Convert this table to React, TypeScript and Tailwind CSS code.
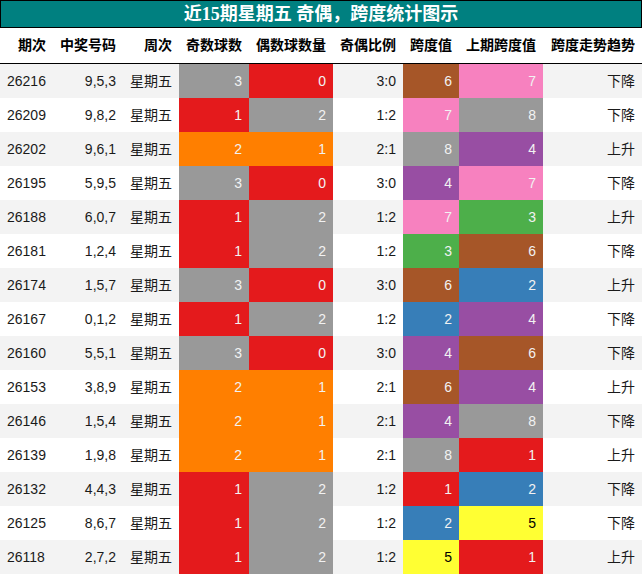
import React from "react";

const rows: [string, string, number, number, string, number, number, string][] = [
  ["26216", "9,5,3", 3, 0, "3:0", 6, 7, "下降"],
  ["26209", "9,8,2", 1, 2, "1:2", 7, 8, "下降"],
  ["26202", "9,6,1", 2, 1, "2:1", 8, 4, "上升"],
  ["26195", "5,9,5", 3, 0, "3:0", 4, 7, "下降"],
  ["26188", "6,0,7", 1, 2, "1:2", 7, 3, "上升"],
  ["26181", "1,2,4", 1, 2, "1:2", 3, 6, "下降"],
  ["26174", "1,5,7", 3, 0, "3:0", 6, 2, "上升"],
  ["26167", "0,1,2", 1, 2, "1:2", 2, 4, "下降"],
  ["26160", "5,5,1", 3, 0, "3:0", 4, 6, "下降"],
  ["26153", "3,8,9", 2, 1, "2:1", 6, 4, "上升"],
  ["26146", "1,5,4", 2, 1, "2:1", 4, 8, "下降"],
  ["26139", "1,9,8", 2, 1, "2:1", 8, 1, "上升"],
  ["26132", "4,4,3", 1, 2, "1:2", 1, 2, "下降"],
  ["26125", "8,6,7", 1, 2, "1:2", 2, 5, "下降"],
  ["26118", "2,7,2", 1, 2, "1:2", 5, 1, "上升"],
];

const oddColor: Record<number, string> = {
  1: "bg-[#e41a1c] text-[#f2f2f2]",
  2: "bg-[#ff7f00] text-[#f2f2f2]",
  3: "bg-[#999999] text-[#f2f2f2]",
};

const evenColor: Record<number, string> = {
  0: "bg-[#e41a1c] text-[#f2f2f2]",
  1: "bg-[#ff7f00] text-[#f2f2f2]",
  2: "bg-[#999999] text-[#f2f2f2]",
};

const spanColor: Record<number, string> = {
  1: "bg-[#e41a1c] text-[#f2f2f2]",
  2: "bg-[#377eb8] text-[#f2f2f2]",
  3: "bg-[#4daf4a] text-[#f2f2f2]",
  4: "bg-[#984ea3] text-[#f2f2f2]",
  5: "bg-[#ffff33] text-black",
  6: "bg-[#a65628] text-[#f2f2f2]",
  7: "bg-[#f781bf] text-[#f2f2f2]",
  8: "bg-[#999999] text-[#f2f2f2]",
};

const headers = ["期次", "中奖号码", "周次", "奇数球数", "偶数球数量", "奇偶比例", "跨度值", "上期跨度值", "跨度走势趋势"];

const grid = "grid grid-cols-[53px_70px_56px_70px_84px_70px_56px_84px_99px]";

export default function App() {
  return (
    <div className="w-[642px] h-[575px] bg-white text-[14px] text-[#1a1a1a] font-['Liberation_Sans','Noto_Sans_CJK_SC',sans-serif]">
      <div className="h-[28px] bg-[#008080] border border-black flex items-center justify-center text-white font-bold text-[18px] font-['Liberation_Serif','Noto_Sans_CJK_SC',serif]">
        近15期星期五 奇偶，跨度统计图示
      </div>
      <div className={`${grid} h-[36px] border-b border-black font-bold text-black`}>
        {headers.map((h) => (
          <div key={h} className="flex items-center justify-end pr-[7px]">
            {h}
          </div>
        ))}
      </div>
      {rows.map((r, i) => (
        <div key={r[0]} className={`${grid} h-[34px] ${i % 2 === 0 ? "bg-[#f3f3f3]" : "bg-white"}`}>
          <div className="flex items-center pl-[7px]">{r[0]}</div>
          <div className="flex items-center justify-end pr-[7px]">{r[1]}</div>
          <div className="flex items-center justify-end pr-[7px]">星期五</div>
          <div className={`flex items-center justify-end pr-[7px] ${oddColor[r[2]]}`}>{r[2]}</div>
          <div className={`flex items-center justify-end pr-[7px] ${evenColor[r[3]]}`}>{r[3]}</div>
          <div className="flex items-center justify-end pr-[7px]">{r[4]}</div>
          <div className={`flex items-center justify-end pr-[7px] ${spanColor[r[5]]}`}>{r[5]}</div>
          <div className={`flex items-center justify-end pr-[7px] ${spanColor[r[6]]}`}>{r[6]}</div>
          <div className="flex items-center justify-end pr-[7px]">{r[7]}</div>
        </div>
      ))}
    </div>
  );
}
